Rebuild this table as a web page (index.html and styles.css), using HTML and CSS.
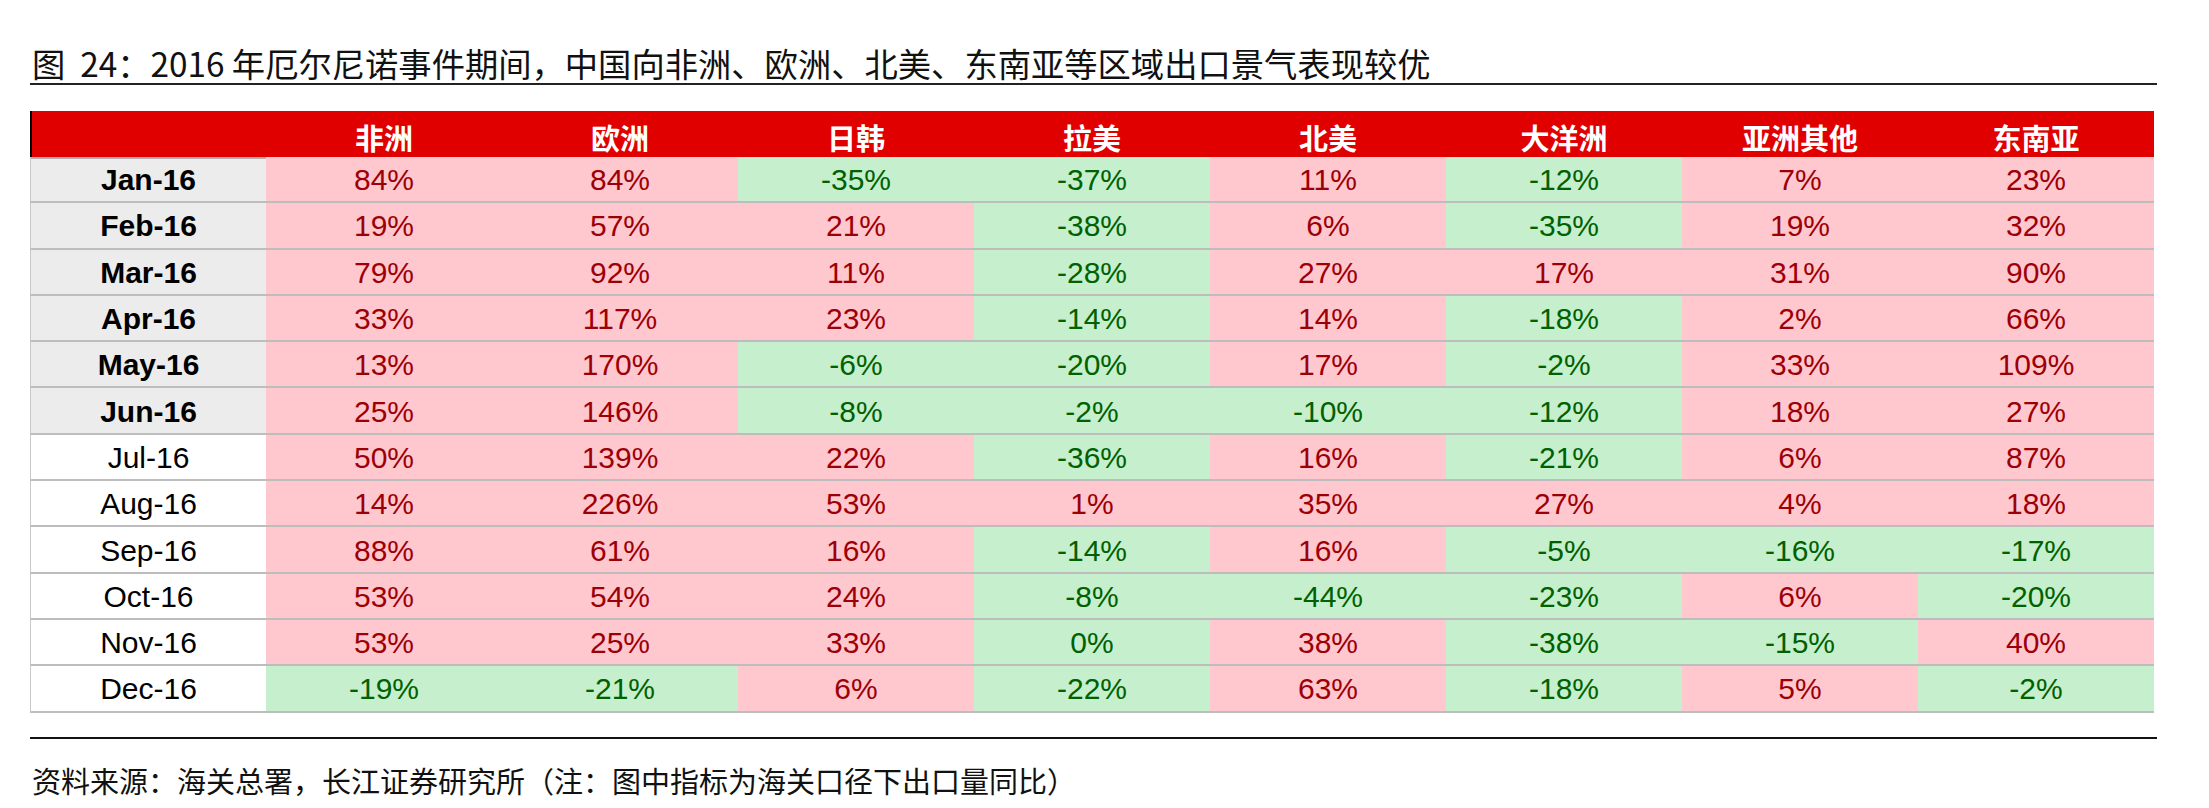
FILE: index.html
```html
<!DOCTYPE html>
<html lang="zh-CN">
<head>
<meta charset="utf-8">
<title>图 24</title>
<link rel="stylesheet" href="styles.css">
</head>
<body>
<div class="page">
  <div class="title">图&nbsp;&nbsp;24：2016 年厄尔尼诺事件期间，中国向非洲、欧洲、北美、东南亚等区域出口景气表现较优</div>
  <div class="table">
    <div class="hcell first"></div>
    <div class="hcell">非洲</div>
    <div class="hcell">欧洲</div>
    <div class="hcell">日韩</div>
    <div class="hcell">拉美</div>
    <div class="hcell">北美</div>
    <div class="hcell">大洋洲</div>
    <div class="hcell">亚洲其他</div>
    <div class="hcell">东南亚</div>

    <div class="cell month hl top">Jan-16</div>
    <div class="cell pos">84%</div><div class="cell pos">84%</div><div class="cell neg">-35%</div><div class="cell neg">-37%</div><div class="cell pos">11%</div><div class="cell neg">-12%</div><div class="cell pos">7%</div><div class="cell pos">23%</div>

    <div class="cell month hl">Feb-16</div>
    <div class="cell pos">19%</div><div class="cell pos">57%</div><div class="cell pos">21%</div><div class="cell neg">-38%</div><div class="cell pos">6%</div><div class="cell neg">-35%</div><div class="cell pos">19%</div><div class="cell pos">32%</div>

    <div class="cell month hl">Mar-16</div>
    <div class="cell pos">79%</div><div class="cell pos">92%</div><div class="cell pos">11%</div><div class="cell neg">-28%</div><div class="cell pos">27%</div><div class="cell pos">17%</div><div class="cell pos">31%</div><div class="cell pos">90%</div>

    <div class="cell month hl">Apr-16</div>
    <div class="cell pos">33%</div><div class="cell pos">117%</div><div class="cell pos">23%</div><div class="cell neg">-14%</div><div class="cell pos">14%</div><div class="cell neg">-18%</div><div class="cell pos">2%</div><div class="cell pos">66%</div>

    <div class="cell month hl">May-16</div>
    <div class="cell pos">13%</div><div class="cell pos">170%</div><div class="cell neg">-6%</div><div class="cell neg">-20%</div><div class="cell pos">17%</div><div class="cell neg">-2%</div><div class="cell pos">33%</div><div class="cell pos">109%</div>

    <div class="cell month hl">Jun-16</div>
    <div class="cell pos">25%</div><div class="cell pos">146%</div><div class="cell neg">-8%</div><div class="cell neg">-2%</div><div class="cell neg">-10%</div><div class="cell neg">-12%</div><div class="cell pos">18%</div><div class="cell pos">27%</div>

    <div class="cell month">Jul-16</div>
    <div class="cell pos">50%</div><div class="cell pos">139%</div><div class="cell pos">22%</div><div class="cell neg">-36%</div><div class="cell pos">16%</div><div class="cell neg">-21%</div><div class="cell pos">6%</div><div class="cell pos">87%</div>

    <div class="cell month">Aug-16</div>
    <div class="cell pos">14%</div><div class="cell pos">226%</div><div class="cell pos">53%</div><div class="cell pos">1%</div><div class="cell pos">35%</div><div class="cell pos">27%</div><div class="cell pos">4%</div><div class="cell pos">18%</div>

    <div class="cell month">Sep-16</div>
    <div class="cell pos">88%</div><div class="cell pos">61%</div><div class="cell pos">16%</div><div class="cell neg">-14%</div><div class="cell pos">16%</div><div class="cell neg">-5%</div><div class="cell neg">-16%</div><div class="cell neg">-17%</div>

    <div class="cell month">Oct-16</div>
    <div class="cell pos">53%</div><div class="cell pos">54%</div><div class="cell pos">24%</div><div class="cell neg">-8%</div><div class="cell neg">-44%</div><div class="cell neg">-23%</div><div class="cell pos">6%</div><div class="cell neg">-20%</div>

    <div class="cell month">Nov-16</div>
    <div class="cell pos">53%</div><div class="cell pos">25%</div><div class="cell pos">33%</div><div class="cell neg">0%</div><div class="cell pos">38%</div><div class="cell neg">-38%</div><div class="cell neg">-15%</div><div class="cell pos">40%</div>

    <div class="cell month">Dec-16</div>
    <div class="cell neg">-19%</div><div class="cell neg">-21%</div><div class="cell pos">6%</div><div class="cell neg">-22%</div><div class="cell pos">63%</div><div class="cell neg">-18%</div><div class="cell pos">5%</div><div class="cell neg">-2%</div>
  </div>
  <div class="rule"></div>
  <div class="source">资料来源：海关总署，长江证券研究所（注：图中指标为海关口径下出口量同比）</div>
</div>
</body>
</html>
```

FILE: styles.css
```css
html, body {
  margin: 0;
  padding: 0;
  background: #ffffff;
}

body {
  font-family: "Noto Sans CJK SC", "Liberation Sans", sans-serif;
  color: #111111;
}

.page {
  padding-left: 30px;
  width: 2127px;
}

.title {
  padding-top: 43px;
  padding-left: 2px;
  line-height: 40px;
  font-size: 33.3px;
  color: #111111;
  border-bottom: 2px solid #222222;
  white-space: nowrap;
}

.table {
  margin-top: 26px;
  width: 2124px;
  display: grid;
  grid-template-columns: repeat(9, 236px);
}

.hcell {
  height: 46px;
  box-sizing: border-box;
  padding-top: 6px;
  background: #e00000;
  color: #ffffff;
  font-family: "Noto Sans CJK SC", sans-serif;
  font-weight: bold;
  font-size: 29px;
  display: flex;
  align-items: center;
  justify-content: center;
}

.hcell.first {
  border-left: 2px solid #000000;
}

.cell {
  height: 46.3px;
  box-sizing: border-box;
  border-bottom: 2px solid #bdbdbd;
  display: flex;
  align-items: center;
  justify-content: center;
  padding-top: 2px;
  font-family: "Liberation Sans", Arial, sans-serif;
  font-size: 30px;
}

.month {
  color: #000000;
  background: #ffffff;
  border-left: 1px solid #c8c8c8;
}

.month.hl {
  background: #ececec;
  font-weight: bold;
}

.month.top {
  box-shadow: inset 0 2px 0 #b0b0b0;
}

.pos {
  background: #ffc7ce;
  color: #9c0006;
}

.neg {
  background: #c6efce;
  color: #006100;
}

.rule {
  margin-top: 24px;
  height: 2px;
  background: #111111;
}

.source {
  margin-top: 21px;
  padding-left: 2px;
  line-height: 40px;
  font-size: 29px;
  color: #111111;
  white-space: nowrap;
}
```
